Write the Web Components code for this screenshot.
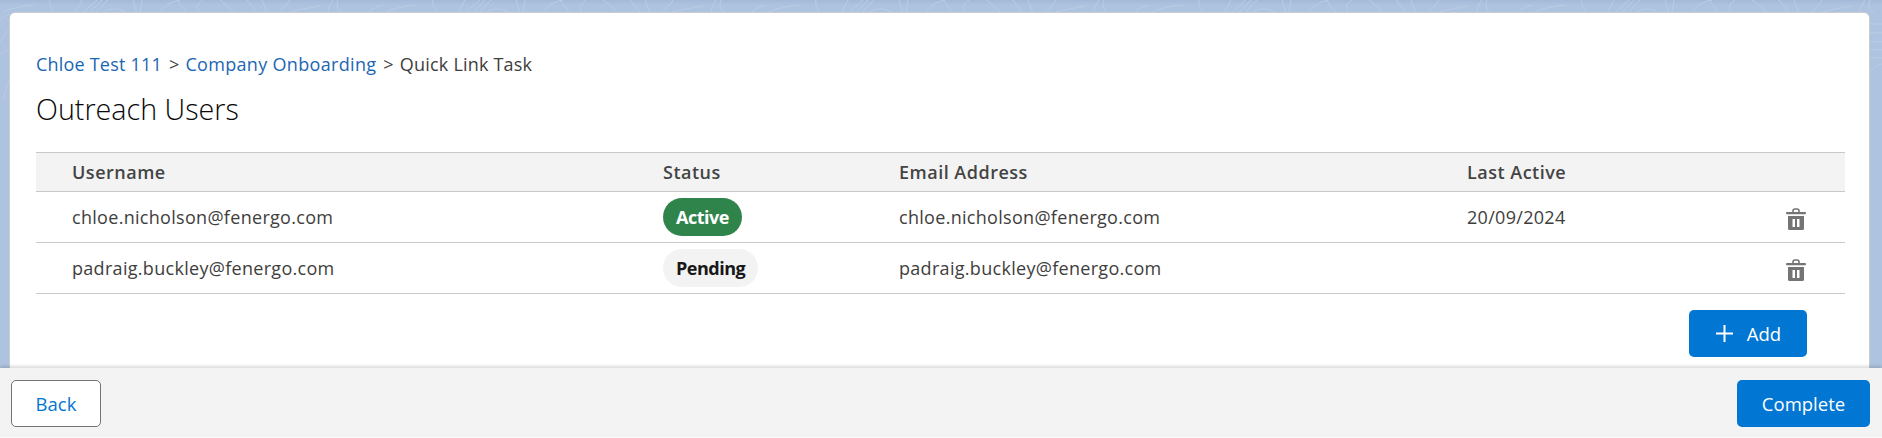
<!DOCTYPE html>
<html>
<head>
<meta charset="utf-8">
<style>
    html, body { margin: 0; height: 100%; overflow: hidden; }
    body { font-family: "Open Sans", "Liberation Sans", sans-serif; }
</style>
</head>
<body>
<task-page>
    <task-card>
        <task-breadcrumb></task-breadcrumb>
        <h-title>Outreach Users</h-title>
        <users-table></users-table>
        <table-actions>
            <action-button variant="primary" icon="plus" size="add">Add</action-button>
        </table-actions>
    </task-card>
    <task-footer slot="footer">
        <action-button variant="outline">Back</action-button>
        <action-button variant="primary" size="complete">Complete</action-button>
    </task-footer>
</task-page>

<script>
class TaskPage extends HTMLElement {
    constructor() {
        super()
        this.attachShadow({ mode: 'open' })
        // one tile of the wallpaper contours, it repeats every 383px along the top strip
        const tile = [
            'M3 12 C12 8 22 6 34 5', 'M50 0 C49 4 51 9 55 13', 'M82 0 C80 4 78 8 75 13',
            'M97 0 C93 4 87 8 83 13', 'M102 0 C98 4 94 8 90 13', 'M108 0 C104 4 100 8 96 13',
            'M103 13 C108 9 116 6 127 13', 'M133 0 L137 13', 'M142 0 L140 13',
            'M160 13 C163 6 170 2 180 0', 'M177 0 L187 13', 'M203 0 C196 5 196 9 200 13',
            'M220 0 C226 4 231 9 235 13', 'M247 0 L257 13', 'M262 0 L267 13',
            'M290 0 C287 5 283 9 278 13', 'M290 12 C300 9 310 8 320 6', 'M333 0 C330 4 328 8 328 13',
            'M338 0 C336 6 337 9 342 13', 'M368 13 C372 9 376 7 383 5'
        ]
        // bits that show in the side strips next to the card
        const side = [
            'M0 20 C3 17 6 15 10 14', 'M0 42 C3 36 6 32 10 28', 'M0 54 C3 52 6 52 10 50',
            'M3 100 C5 92 7 84 10 78', 'M1870 24 H1882', 'M1870 33 H1882', 'M1870 42 H1882',
            'M1870 50 H1882', 'M1870 58 H1882', 'M1871 72 C1874 66 1878 64 1882 64'
        ]
        this.shadowRoot.innerHTML = `
            <style>
                :host { display: flex; flex-direction: column; height: 438px; position: relative; background: linear-gradient(#a3b9d7, #aec3df 5px); overflow: hidden; }
                svg { position: absolute; top: 0; left: 0; }
                .main { flex: 1; min-height: 0; padding: 13px 13px 0 10px; position: relative; }
                .foot { position: relative; }
            </style>
            <svg width="1882" height="438" fill="none" stroke="#bbcce3" stroke-width="1">
                <defs>
                    <pattern id="contour" width="383" height="14" patternUnits="userSpaceOnUse">
                        ${tile.map(d => `<path d="${d}"/>`).join('')}
                    </pattern>
                </defs>
                <rect width="1882" height="14" fill="url(#contour)" stroke="none"/>
                ${side.map(d => `<path d="${d}"/>`).join('')}
            </svg>
            <div class="main"><slot></slot></div>
            <div class="foot"><slot name="footer"></slot></div>
        `
    }
}

class TaskCard extends HTMLElement {
    constructor() {
        super()
        this.attachShadow({ mode: 'open' })
        this.shadowRoot.innerHTML = `
            <style>
                :host { display: block; height: 100%; box-sizing: border-box; background: #fff; border-radius: 5px 5px 0 0; box-shadow: 0 0 0 1px #c9ccd0; padding: 40px 24px 0 26px; }
            </style>
            <slot></slot>
        `
    }
}

class TaskBreadcrumb extends HTMLElement {
    constructor() {
        super()
        this.attachShadow({ mode: 'open' })
        this.shadowRoot.innerHTML = `
            <style>
                :host { display: block; font-size: 18px; line-height: 22px; color: #3e3e3c; letter-spacing: 0.2px; }
                a { color: #1b66b3; text-decoration: none; }
                a + span + a { letter-spacing: 0.32px; }
                span { margin: 0 6px 0 7px; }
            </style>
            <a href="#">Chloe Test 111</a><span>&gt;</span><a href="#">Company Onboarding</a><span>&gt;</span>Quick Link Task
        `
    }
}

class HTitle extends HTMLElement {
    constructor() {
        super()
        this.attachShadow({ mode: 'open' })
        this.shadowRoot.innerHTML = `
            <style>
                :host { display: block; margin-top: 15px; font-size: 28.7px; line-height: 38px; font-weight: 300; color: #080808; }
            </style>
            <slot></slot>
        `
    }
}

class StatusBadge extends HTMLElement {
    constructor() {
        super()
        this.attachShadow({ mode: 'open' })
        const active = this.getAttribute('state') === 'active'
        this.shadowRoot.innerHTML = `
            <style>
                :host { display: inline-flex; align-items: center; height: 38px; padding: 0 13px; border-radius: 19px; font-size: 18px; font-weight: 700; letter-spacing: -0.5px;
                    background: ${active ? '#2e844a' : '#f3f3f3'}; color: ${active ? '#fff' : '#181818'}; }
            </style>
            <slot></slot>
        `
    }
}

class UserRow extends HTMLElement {
    constructor() {
        super()
        this.attachShadow({ mode: 'open' })
        const head = this.hasAttribute('head')
        this.shadowRoot.innerHTML = `
            <style>
                :host { display: grid; grid-template-columns: 627px 236px 568px 1fr 98px; align-items: center; box-sizing: border-box; border-bottom: 1px solid #c9c9c9;
                    height: ${head ? '40px' : '51px'}; font-size: 18px; letter-spacing: ${head ? '0.5px' : '0.3px'};
                    ${head ? 'background: #f3f3f3; border-top: 1px solid #c9c9c9; font-weight: 600; color: #444;' : 'color: #3e3e3c;'} }
                ::slotted(*) { min-width: 0; }
                ::slotted(:first-child) { padding-left: 36px; }
            </style>
            <slot></slot>
        `
    }
}

class TrashIcon extends HTMLElement {
    constructor() {
        super()
        this.attachShadow({ mode: 'open' })
        this.shadowRoot.innerHTML = `
            <style>
                :host { display: block; width: 20px; height: 22px; margin: 3px 0 0 39px; }
                svg { display: block; }
            </style>
            <svg width="20" height="22" viewBox="0 0 20 22">
                <path d="M7 4 V3 a2 2 0 0 1 2-2 h2 a2 2 0 0 1 2 2 V4" fill="none" stroke="#747474" stroke-width="1.6"/>
                <rect x="0" y="4" width="20" height="2.2" rx="1" fill="#747474"/>
                <path fill-rule="evenodd" fill="#747474" d="M2 8 H18 V20.5 a1.5 1.5 0 0 1 -1.5 1.5 H3.5 A1.5 1.5 0 0 1 2 20.5 Z M6.5 11 V19 H9 V11 Z M11 11 V19 H13.5 V11 Z"/>
            </svg>
        `
    }
}

class UsersTable extends HTMLElement {
    constructor() {
        super()
        this.attachShadow({ mode: 'open' })
        this.shadowRoot.innerHTML = `
            <style>
                :host { display: block; margin-top: 24px; }
            </style>
            <user-row head><div>Username</div><div>Status</div><div>Email Address</div><div>Last Active</div><div></div></user-row>
            <user-row><div>chloe.nicholson@fenergo.com</div><div><status-badge state="active">Active</status-badge></div><div>chloe.nicholson@fenergo.com</div><div>20/09/2024</div><div><trash-icon></trash-icon></div></user-row>
            <user-row><div>padraig.buckley@fenergo.com</div><div><status-badge state="pending">Pending</status-badge></div><div>padraig.buckley@fenergo.com</div><div></div><div><trash-icon></trash-icon></div></user-row>
        `
    }
}

class TableActions extends HTMLElement {
    constructor() {
        super()
        this.attachShadow({ mode: 'open' })
        this.shadowRoot.innerHTML = `
            <style>
                :host { display: flex; justify-content: flex-end; padding: 16px 38px 0 0; }
            </style>
            <slot></slot>
        `
    }
}

class ActionButton extends HTMLElement {
    constructor() {
        super()
        this.attachShadow({ mode: 'open' })
        const primary = this.getAttribute('variant') === 'primary'
        const size = this.getAttribute('size')
        const width = size === 'add' ? 118 : size === 'complete' ? 133 : 90
        const plus = this.getAttribute('icon') === 'plus'
            ? `<svg width="19" height="19" viewBox="0 0 19 19"><path d="M9.5 1 V18 M1 9.5 H18" stroke="#fff" stroke-width="2"/></svg>` : ''
        this.shadowRoot.innerHTML = `
            <style>
                :host { display: inline-flex; align-items: center; justify-content: center; gap: 13px; box-sizing: border-box; width: ${width}px; height: 47px; border-radius: 5px; font-size: 18.5px;
                    ${primary ? 'background: #0176d3; color: #fff;' : 'background: #fff; color: #0176d3; border: 1px solid #747474;'} }
            </style>
            ${plus}<slot></slot>
        `
    }
}

class TaskFooter extends HTMLElement {
    constructor() {
        super()
        this.attachShadow({ mode: 'open' })
        this.shadowRoot.innerHTML = `
            <style>
                :host { display: flex; justify-content: space-between; align-items: flex-start; box-sizing: border-box; height: 70px; padding: 12px 12px 0 11px; background: #f3f3f3; border-bottom: 1px solid #fafafa; box-shadow: 0 -2px 3px rgba(0,0,0,.14); }
            </style>
            <slot></slot>
        `
    }
}

customElements.define('user-row', UserRow)
customElements.define('status-badge', StatusBadge)
customElements.define('trash-icon', TrashIcon)
customElements.define('users-table', UsersTable)
customElements.define('table-actions', TableActions)
customElements.define('action-button', ActionButton)
customElements.define('task-breadcrumb', TaskBreadcrumb)
customElements.define('h-title', HTitle)
customElements.define('task-card', TaskCard)
customElements.define('task-footer', TaskFooter)
customElements.define('task-page', TaskPage)
</script>
</body>
</html>
